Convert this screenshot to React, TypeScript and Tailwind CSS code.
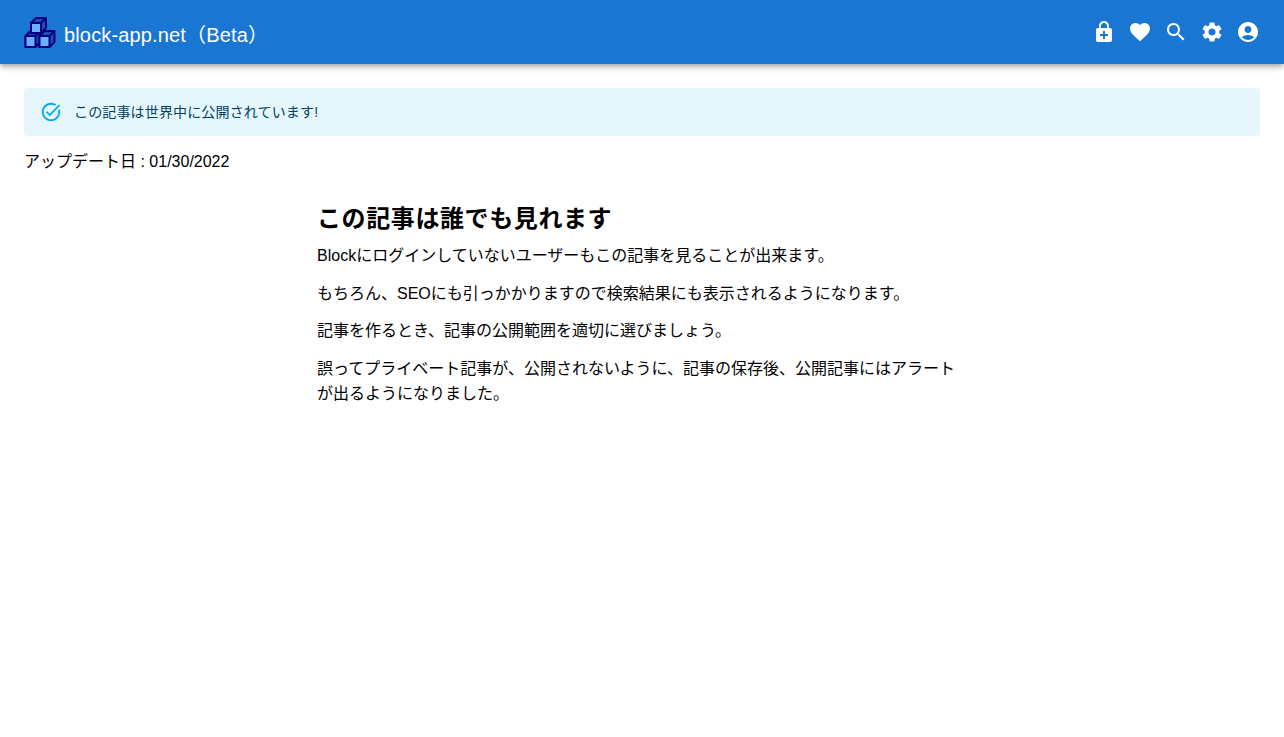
const FONT = "font-['Liberation_Sans','Noto_Sans_CJK_JP',sans-serif]"

const icons = [
  "M18 8h-1V6c0-2.76-2.24-5-5-5S7 3.24 7 6v2H6c-1.11 0-2 .9-2 2v10c0 1.1.89 2 2 2h12c1.1 0 2-.9 2-2V10c0-1.1-.9-2-2-2zM8.9 6c0-1.71 1.39-3.1 3.1-3.1s3.1 1.39 3.1 3.1v2H8.9V6zM16 16h-3v3h-2v-3H8v-2h3v-3h2v3h3v2z",
  "M12 21.35l-1.45-1.32C5.4 15.36 2 12.28 2 8.5 2 5.42 4.42 3 7.5 3c1.74 0 3.41.81 4.5 2.09C13.09 3.81 14.76 3 16.5 3 19.58 3 22 5.42 22 8.5c0 3.78-3.4 6.86-8.55 11.54L12 21.35z",
  "M15.5 14h-.79l-.28-.27C15.41 12.59 16 11.11 16 9.5 16 5.91 13.09 3 9.5 3S3 5.91 3 9.5 5.91 16 9.5 16c1.61 0 3.09-.59 4.23-1.57l.27.28v.79l5 4.99L20.49 19l-4.99-5zm-6 0C7.01 14 5 11.99 5 9.5S7.01 5 9.5 5 14 7.01 14 9.5 11.99 14 9.5 14z",
  "M19.14 12.94c.04-.3.06-.61.06-.94 0-.32-.02-.64-.07-.94l2.03-1.58c.18-.14.23-.41.12-.61l-1.92-3.32c-.12-.22-.37-.29-.59-.22l-2.39.96c-.5-.38-1.03-.7-1.62-.94l-.36-2.54c-.04-.24-.24-.41-.48-.41h-3.84c-.24 0-.43.17-.47.41l-.36 2.54c-.59.24-1.13.57-1.62.94l-2.39-.96c-.22-.08-.47 0-.59.22L2.74 8.87c-.12.21-.08.47.12.61l2.03 1.58c-.05.3-.09.63-.09.94s.02.64.07.94l-2.03 1.58c-.18.14-.23.41-.12.61l1.92 3.32c.12.22.37.29.59.22l2.39-.96c.5.38 1.03.7 1.62.94l.36 2.54c.05.24.24.41.48.41h3.84c.24 0 .44-.17.47-.41l.36-2.54c.59-.24 1.13-.56 1.62-.94l2.39.96c.22.08.47 0 .59-.22l1.92-3.32c.12-.22.07-.47-.12-.61l-2.01-1.58zM12 15.6c-1.98 0-3.6-1.62-3.6-3.6s1.62-3.6 3.6-3.6 3.6 1.62 3.6 3.6-1.62 3.6-3.6 3.6z",
  "M12 2C6.48 2 2 6.48 2 12s4.48 10 10 10 10-4.48 10-10S17.52 2 12 2zm0 4c1.93 0 3.5 1.57 3.5 3.5S13.93 13 12 13s-3.5-1.57-3.5-3.5S10.07 6 12 6zm0 14c-2.03 0-4.43-.82-6.14-2.88C7.55 15.8 9.68 15 12 15s4.45.8 6.14 2.12C16.43 19.18 14.03 20 12 20z",
]

function Cube({ x, y, h }: { x: number; y: number; h: number }) {
  return (
    <g transform={`translate(${x} ${y})`} stroke="#00007f" strokeWidth="2" strokeLinejoin="round">
      <path d={`M0 5l5-5h10v${h}l-5 5H0z`} fill="#1a4fb5" />
      <path d={`M0 5h10v${h}H0z`} fill="#6cb0ff" />
      <path d="M10 5l5-5" fill="none" />
    </g>
  )
}

function Logo() {
  return (
    <svg width="32" height="32" viewBox="0 0 32 32" className="mr-2 shrink-0">
      <Cube x={1.5} y={15} h={11} />
      <Cube x={15.5} y={15} h={11} />
      <Cube x={7} y={2} h={10} />
    </svg>
  )
}

export default function App() {
  return (
    <div className={`${FONT} min-h-[737px] bg-white text-black`}>
      <header className="h-16 bg-[#1976d2] text-white px-6 flex items-center shadow-[0_2px_4px_-1px_rgba(0,0,0,0.2),0_4px_5px_0_rgba(0,0,0,0.14),0_1px_10px_0_rgba(0,0,0,0.12)]">
        <Logo />
        <div className="text-xl leading-8 pt-1.5 tracking-[0.15px]">block-app.net（Beta）</div>
        <div className="ml-auto -mr-1.5 flex">
          {icons.map((d) => (
            <div key={d} className="w-9 h-9 flex items-center justify-center">
              <svg width="24" height="24" viewBox="0 0 24 24" fill="currentColor">
                <path d={d} />
              </svg>
            </div>
          ))}
        </div>
      </header>
      <main className="px-6 pt-6">
        <div className="h-12 rounded bg-[#e5f6fd] text-[#014361] pl-4 flex items-center text-sm tracking-[0.15px]">
          <svg width="22" height="22" viewBox="0 0 24 24" fill="#03a9f4" className="mr-3 shrink-0">
            <path d="M22 5.18 10.59 16.6l-4.24-4.24 1.41-1.41 2.83 2.83 10-10L22 5.18zm-2.21 5.04c.13.57.21 1.17.21 1.78 0 4.42-3.58 8-8 8s-8-3.58-8-8 3.58-8 8-8c1.58 0 3.04.46 4.28 1.25l1.44-1.44C16.1 2.67 14.13 2 12 2 6.48 2 2 6.48 2 12s4.48 10 10 10 10-4.48 10-10c0-1.19-.22-2.33-.6-3.39l-1.61 1.61z" />
          </svg>
          <span>この記事は世界中に公開されています!</span>
        </div>
        <p className="mt-3 text-base leading-[28px]">アップデート日 : 01/30/2022</p>
        <article className="w-[650px] mx-auto mt-[25px] text-base leading-[25.6px]">
          <h2 className="text-2xl leading-9 font-bold tracking-[0.6px]">この記事は誰でも見れます</h2>
          <p className="mt-[6px]">Blockにログインしていないユーザーもこの記事を見ることが出来ます。</p>
          <p className="mt-3">もちろん、SEOにも引っかかりますので検索結果にも表示されるようになります。</p>
          <p className="mt-3">記事を作るとき、記事の公開範囲を適切に選びましょう。</p>
          <p className="mt-3">誤ってプライベート記事が、公開されないように、記事の保存後、公開記事にはアラートが出るようになりました。</p>
        </article>
      </main>
    </div>
  )
}
